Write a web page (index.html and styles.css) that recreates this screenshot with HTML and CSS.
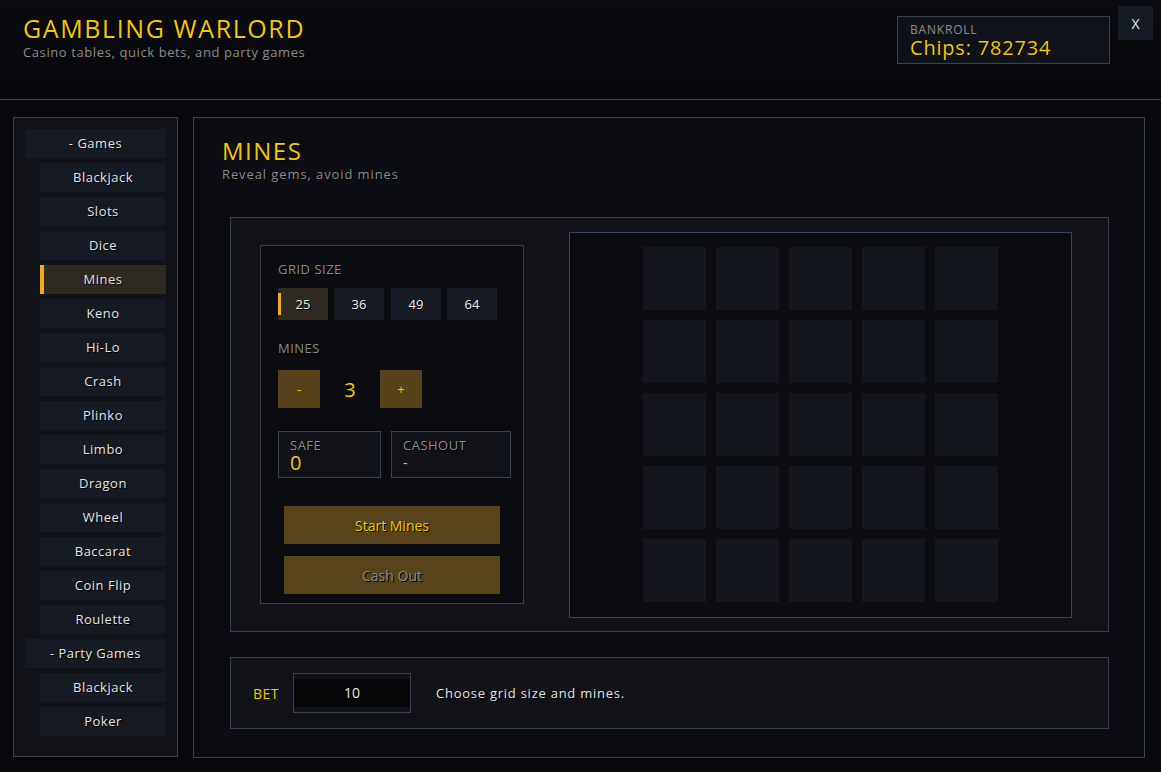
FILE: index.html
```html
<!DOCTYPE html>
<html lang="en">
<head>
    <meta charset="UTF-8">
    <title>Gambling Warlord</title>
    <link rel="stylesheet" href="styles.css">
</head>
<body>
    <header class="top">
        <div class="brand">
            <h1>GAMBLING WARLORD</h1>
            <p>Casino tables, quick bets, and party games</p>
        </div>
        <div class="bankroll">
            <span class="bankroll-label">BANKROLL</span>
            <span class="bankroll-value">Chips: 782734</span>
        </div>
        <button class="close-btn">X</button>
    </header>

    <div class="layout">
        <!-- game list -->
        <aside class="sidebar">
            <div class="group">- Games</div>
            <div class="item">Blackjack</div>
            <div class="item">Slots</div>
            <div class="item">Dice</div>
            <div class="item active">Mines</div>
            <div class="item">Keno</div>
            <div class="item">Hi-Lo</div>
            <div class="item">Crash</div>
            <div class="item">Plinko</div>
            <div class="item">Limbo</div>
            <div class="item">Dragon</div>
            <div class="item">Wheel</div>
            <div class="item">Baccarat</div>
            <div class="item">Coin Flip</div>
            <div class="item">Roulette</div>
            <div class="group">- Party Games</div>
            <div class="item">Blackjack</div>
            <div class="item">Poker</div>
        </aside>

        <main class="panel">
            <h2>MINES</h2>
            <p class="sub">Reveal gems, avoid mines</p>

            <div class="game">
                <div class="controls">
                    <div class="label">GRID SIZE</div>
                    <div class="sizes">
                        <button class="size active">25</button>
                        <button class="size">36</button>
                        <button class="size">49</button>
                        <button class="size">64</button>
                    </div>

                    <div class="label mines-label">MINES</div>
                    <div class="mines-row">
                        <button class="step">-</button>
                        <span class="mines-count">3</span>
                        <button class="step">+</button>
                    </div>

                    <div class="stats">
                        <div class="stat safe">
                            <span class="stat-label">SAFE</span>
                            <span class="stat-value">0</span>
                        </div>
                        <div class="stat cashout">
                            <span class="stat-label">CASHOUT</span>
                            <span class="stat-value small">-</span>
                        </div>
                    </div>

                    <button class="action start">Start Mines</button>
                    <button class="action disabled">Cash Out</button>
                </div>

                <div class="board">
                    <div class="tiles" id="tiles"></div>
                </div>
            </div>

            <div class="betbar">
                <span class="bet-label">BET</span>
                <div class="bet-input">10</div>
                <span class="bet-msg">Choose grid size and mines.</span>
            </div>
        </main>
    </div>

    <script>
        // fill the 5x5 board
        const tiles = document.getElementById("tiles");
        for (let i = 0; i < 25; i++) {
            const t = document.createElement("div");
            t.classList.add("tile");
            tiles.appendChild(t);
        }
    </script>
</body>
</html>
```

FILE: styles.css
```css
body {
    margin: 0;
    padding: 0;
    background: #07080b;
    color: #e2e2e2;
    font-family: 'Open Sans', 'DejaVu Sans', sans-serif;
    height: 772px;
    overflow: hidden;
}

/* Header */
.top {
    height: 100px;
    border-bottom: 1px solid #3a3f4e;
    background: linear-gradient(180deg, #0a0b10 0%, #06070a 100%);
    display: flex;
    align-items: flex-start;
    box-sizing: border-box;
}

.brand {
    padding: 12px 0 0 23px;
    flex: 1;
}

.brand h1 {
    margin: 0;
    font-size: 25px;
    font-weight: normal;
    line-height: 32px;
    letter-spacing: 1.6px;
    color: #f5c800;
    text-shadow: 1px 1px 0 #000;
}

.brand p {
    margin: 0;
    font-size: 13px;
    line-height: 16px;
    letter-spacing: 0.6px;
    color: #8c8c8c;
}

.bankroll {
    margin-top: 16px;
    width: 213px;
    height: 48px;
    box-sizing: border-box;
    border: 1px solid #3a4252;
    background: #10121a;
    padding: 5px 12px 0;
    display: flex;
    flex-direction: column;
}

.bankroll-label {
    font-size: 12px;
    line-height: 15px;
    letter-spacing: 0.8px;
    color: #8c8c8c;
}

.bankroll-value {
    font-size: 20px;
    line-height: 22px;
    color: #f5c800;
    letter-spacing: 0.8px;
    text-shadow: 1px 1px 0 #000;
}

.close-btn {
    margin: 6px 8px 0 8px;
    width: 35px;
    height: 34px;
    border: none;
    background: #161a22;
    color: #f0f0f0;
    font-family: inherit;
    font-size: 14px;
    cursor: pointer;
}

/* Layout */
.layout {
    display: flex;
    gap: 15px;
    padding: 17px 16px 0 13px;
}

.sidebar {
    width: 165px;
    height: 640px;
    box-sizing: border-box;
    border: 1px solid #3a4252;
    background: #111318;
    padding: 11px 11px 0 11px;
    display: flex;
    flex-direction: column;
    gap: 5px;
}

.group, .item {
    height: 29px;
    line-height: 29px;
    text-align: center;
    font-size: 13px;
    letter-spacing: 0.5px;
    color: #e4e4e4;
    background: #161a22;
    text-shadow: 1px 1px 0 #000;
}

.item {
    margin-left: 15px;
    position: relative;
}

.item.active {
    background: #2e2a22;
}

.item.active::before {
    content: "";
    position: absolute;
    left: 0;
    top: 0;
    width: 4px;
    height: 100%;
    background: #f2aa1e;
}

/* Main panel */
.panel {
    flex: 1;
    height: 641px;
    box-sizing: border-box;
    border: 1px solid #3a4252;
    background: #0b0d12;
    padding: 18px 35px 0 36px;
}

.panel h2 {
    margin: 0 0 0 -8px;
    font-size: 24px;
    font-weight: normal;
    line-height: 30px;
    letter-spacing: 1.5px;
    color: #f5c800;
    text-shadow: 1px 1px 0 #000;
}

.panel .sub {
    margin: 0 0 0 -8px;
    font-size: 13px;
    line-height: 17px;
    letter-spacing: 0.9px;
    color: #8c8c8c;
    text-shadow: 1px 1px 0 #000;
}

.game {
    margin-top: 34px;
    height: 415px;
    box-sizing: border-box;
    border: 1px solid #3a4252;
    background: #111318;
    padding: 0 36px 0 29px;
    display: flex;
    align-items: center;
    gap: 45px;
}

.controls {
    width: 264px;
    height: 359px;
    flex-shrink: 0;
    box-sizing: border-box;
    border: 1px solid #3a4252;
    background: #0a0c10;
    padding: 15px 12px 0 17px;
}

.label {
    font-size: 13px;
    line-height: 16px;
    letter-spacing: 0.5px;
    color: #8c8c8c;
    text-shadow: 1px 1px 0 #000;
}

.sizes {
    display: flex;
    gap: 6px;
    margin-top: 11px;
}

button {
    font-family: inherit;
    border: none;
    cursor: pointer;
}

.size {
    width: 50px;
    height: 32px;
    background: #161a22;
    color: #f0f0f0;
    font-size: 13px;
    text-shadow: 1px 1px 0 #000;
    position: relative;
}

.size:nth-child(3) {
    margin-left: 1px;
}

.size.active {
    background: #2e2a22;
}

.size.active::before {
    content: "";
    position: absolute;
    left: 0;
    top: 5px;
    width: 3px;
    height: 22px;
    background: #f2aa1e;
}

.mines-label {
    margin-top: 20px;
}

.mines-row {
    display: flex;
    align-items: center;
    margin-top: 14px;
}

.step {
    width: 42px;
    height: 38px;
    background: #57431b;
    color: #f5c800;
    font-size: 13px;
}

.mines-count {
    width: 60px;
    text-align: center;
    font-size: 20px;
    color: #f5c800;
}

.stats {
    display: flex;
    gap: 10px;
    margin-top: 23px;
}

.stat {
    height: 47px;
    flex-shrink: 0;
    box-sizing: border-box;
    border: 1px solid #3a4252;
    background: #111318;
    padding: 6px 11px 0;
    display: flex;
    flex-direction: column;
}

.stat.safe {
    width: 103px;
}

.stat.cashout {
    width: 120px;
}

.stat-label {
    font-size: 13px;
    line-height: 14px;
    letter-spacing: 0.5px;
    color: #8c8c8c;
    text-shadow: 1px 1px 0 #000;
}

.stat-value {
    font-size: 20px;
    line-height: 22px;
    color: #f5c800;
}

.stat-value.small {
    font-size: 14px;
}

.action {
    display: block;
    width: 216px;
    height: 38px;
    margin: 0 0 0 6px;
    background: #57441b;
    color: #f5c800;
    font-size: 14px;
    text-shadow: 1px 1px 0 #000;
}

.action.start {
    margin-top: 28px;
}

.action.disabled {
    margin-top: 12px;
    color: #8a8a8a;
}

/* Board */
.board {
    width: 503px;
    height: 386px;
    box-sizing: border-box;
    border: 1px solid #3a4660;
    background: #0a0c10;
    display: flex;
    align-items: center;
    justify-content: center;
}

.tiles {
    display: grid;
    grid-template-columns: repeat(5, 63px);
    grid-auto-rows: 63px;
    gap: 10px;
}

.tile {
    background: #13161d;
}

/* Bet bar */
.betbar {
    margin-top: 25px;
    height: 72px;
    box-sizing: border-box;
    border: 1px solid #3a4252;
    background: #111318;
    padding: 0 22px;
    display: flex;
    align-items: center;
}

.bet-label {
    font-size: 14px;
    letter-spacing: 0.5px;
    color: #f5c800;
    width: 40px;
}

.bet-input {
    width: 118px;
    height: 40px;
    box-sizing: border-box;
    border: 1px solid #3a4252;
    background: #050608;
    box-shadow: inset 0 5px 0 #111318, inset 0 -5px 0 #111318;
    text-align: center;
    line-height: 38px;
    font-size: 14px;
    color: #f0ecdc;
}

.bet-msg {
    margin-left: 25px;
    font-size: 13px;
    letter-spacing: 0.75px;
    color: #e4e4e4;
    text-shadow: 1px 1px 0 #000;
}
```
